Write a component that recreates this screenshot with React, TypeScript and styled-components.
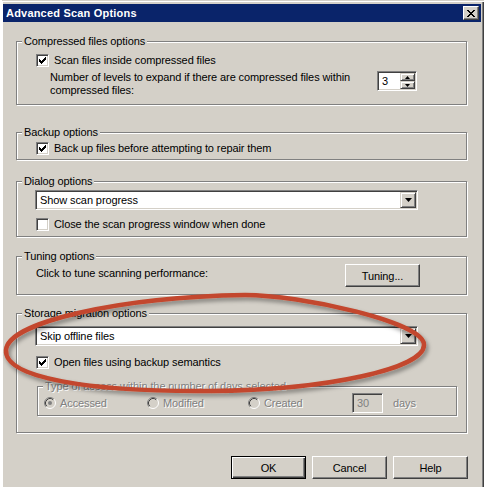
import React from "react";
import styled, { createGlobalStyle } from "styled-components";

const GlobalStyle = createGlobalStyle`
  html, body {
    margin: 0;
    padding: 0;
    background: #fff;
    overflow: hidden;
  }
  body {
    font-family: "Liberation Sans", Arial, sans-serif;
    font-size: 11px;
    color: #000;
  }
`;

const Page = styled.div`
  position: relative;
  width: 484px;
  height: 487px;
  overflow: hidden;
  background: #fff;
`;

const Window = styled.div`
  margin-left: 2px;
  width: 482px;
  height: 500px;
  box-sizing: border-box;
  padding: 4px 3px 0 1px;
  background: #d4d0c8;
  box-shadow: inset 0 1px #d4d0c8, inset 0 2px #fff, inset -1px 0 #404040,
    inset -2px 0 #808080, inset 1px 0 #fff;
`;

const TitleBar = styled.div`
  height: 18px;
  display: flex;
  align-items: center;
  padding-left: 3px;
  background: #0a246a;
  color: #fff;
  font-weight: bold;
  font-size: 11px;
  letter-spacing: 0.2px;
`;

const CloseButton = styled.div`
  margin-left: auto;
  margin-right: 2px;
  width: 16px;
  height: 14px;
  box-sizing: border-box;
  display: flex;
  align-items: center;
  justify-content: center;
  background: #d4d0c8;
  border: 1px solid;
  border-color: #fff #404040 #404040 #fff;
  box-shadow: inset -1px -1px #808080;
`;

const Content = styled.div`
  padding: 0 14px 0 13px;
  letter-spacing: -0.1px;
`;

const Group = styled.div<{ $top: number; $pb: number; $ml?: number; $mr?: number }>`
  margin: ${(p) => p.$top}px ${(p) => p.$mr ?? 0}px 0 ${(p) => p.$ml ?? 0}px;
  padding-bottom: ${(p) => p.$pb}px;
  border: 1px solid #808080;
  box-shadow: inset 1px 1px #fff, 1px 1px #fff;
`;

const Caption = styled.div<{ $disabled?: boolean }>`
  display: table;
  margin: -7px 0 0 5px;
  padding: 0 2px;
  line-height: 13px;
  background: #d4d0c8;
  color: ${(p) => (p.$disabled ? "#808080" : "#000")};
  text-shadow: ${(p) => (p.$disabled ? "1px 1px 0 #fff" : "none")};
`;

const CheckRow = styled.div<{ $top: number }>`
  display: flex;
  align-items: center;
  gap: 5px;
  margin-top: ${(p) => p.$top}px;
  padding-left: 19px;
  height: 13px;
  line-height: 13px;
`;

const Box = styled.div`
  width: 13px;
  height: 13px;
  box-sizing: border-box;
  display: flex;
  align-items: center;
  justify-content: center;
  background: #fff;
  border: 1px solid;
  border-color: #808080 #fff #fff #808080;
  box-shadow: inset 1px 1px #404040, inset -1px -1px #d4d0c8;
`;

const LevelsRow = styled.div`
  display: flex;
  align-items: flex-start;
  gap: 6px;
  margin-top: 4px;
  padding-left: 33px;
`;

const LevelsText = styled.div`
  width: 321px;
  line-height: 13px;
`;

const Sunken = styled.div<{ $w: number; $bg?: string }>`
  width: ${(p) => p.$w}px;
  height: 20px;
  box-sizing: border-box;
  display: flex;
  align-items: center;
  background: ${(p) => p.$bg ?? "#fff"};
  border: 1px solid;
  border-color: #808080 #fff #fff #808080;
  box-shadow: inset 1px 1px #404040, inset -1px -1px #d4d0c8;
`;

const Combo = styled(Sunken)<{ $top: number }>`
  margin: ${(p) => p.$top}px 0 0 18px;
`;

const FieldText = styled.span<{ $grey?: boolean }>`
  padding-left: 4px;
  color: ${(p) => (p.$grey ? "#808080" : "#000")};
`;

const SpinButtons = styled.div`
  margin-left: auto;
  margin-right: 1px;
  display: flex;
  flex-direction: column;
`;

const Raised = styled.div<{ $w: number; $h: number }>`
  width: ${(p) => p.$w}px;
  height: ${(p) => p.$h}px;
  box-sizing: border-box;
  display: flex;
  align-items: center;
  justify-content: center;
  background: #d4d0c8;
  border: 1px solid;
  border-color: #d4d0c8 #404040 #404040 #d4d0c8;
  box-shadow: inset 1px 1px #fff, inset -1px -1px #808080;
`;

const DropSlot = styled.div`
  margin-left: auto;
  margin-right: 1px;
`;

const TuneRow = styled.div`
  display: flex;
  margin-top: 1px;
  padding-left: 19px;
  padding-right: 46px;
`;

const TuneText = styled.div`
  padding-top: 3px;
  line-height: 13px;
`;

const PushButton = styled.div<{ $default?: boolean }>`
  width: 75px;
  height: 23px;
  box-sizing: border-box;
  display: flex;
  align-items: center;
  justify-content: center;
  background: #d4d0c8;
  border: 1px solid;
  border-color: ${(p) => (p.$default ? "#000" : "#fff #404040 #404040 #fff")};
  box-shadow: ${(p) =>
    p.$default
      ? "inset 1px 1px #fff, inset -1px -1px #404040, inset -2px -2px #808080"
      : "inset -1px -1px #808080"};
`;

const TuneButton = styled(PushButton)`
  margin-left: auto;
`;

const RadioRow = styled.div`
  display: flex;
  align-items: center;
  height: 20px;
  padding-left: 6px;
`;

const RadioItem = styled.div<{ $w: number }>`
  width: ${(p) => p.$w}px;
  display: flex;
  align-items: center;
  gap: 4px;
`;

const Muted = styled.span`
  color: #808080;
  text-shadow: 1px 1px 0 #fff;
`;

const DaysLabel = styled(Muted)`
  margin-left: 10px;
`;

const ButtonRow = styled.div`
  display: flex;
  justify-content: flex-end;
  gap: 6px;
  margin: 23px -1px 0 0;
`;

const Annotation = styled.svg`
  position: absolute;
  left: 0;
  top: 0;
  pointer-events: none;
`;

const CheckMark = () => (
  <svg width="7" height="7" viewBox="0 0 7 7" shapeRendering="crispEdges">
    <path
      d="M0 2h1v3H0z M1 3h1v3H1z M2 4h1v3H2z M3 3h1v3H3z M4 2h1v3H4z M5 1h1v3H5z M6 0h1v3H6z"
      fill="#000"
    />
  </svg>
);

const Checkbox = ({ checked }: { checked?: boolean }) => (
  <Box>{checked && <CheckMark />}</Box>
);

const Arrow = ({ up, w, h }: { up?: boolean; w: number; h: number }) => (
  <svg width={w} height={h} viewBox={`0 0 ${w} ${h}`}>
    <polygon
      points={up ? `0,${h} ${w},${h} ${w / 2},0` : `0,0 ${w},0 ${w / 2},${h}`}
      fill="#000"
    />
  </svg>
);

const Radio = ({ checked }: { checked?: boolean }) => (
  <svg width="12" height="12" viewBox="0 0 12 12">
    <circle cx="6" cy="6" r="5.5" fill="#d4d0c8" />
    <path d="M2.11 9.89 A5.5 5.5 0 0 1 9.89 2.11" stroke="#808080" fill="none" />
    <path d="M2.82 9.18 A4.5 4.5 0 0 1 9.18 2.82" stroke="#404040" fill="none" />
    <path d="M9.89 2.11 A5.5 5.5 0 0 1 2.11 9.89" stroke="#fff" fill="none" />
    {checked && <circle cx="6" cy="6" r="2" fill="#808080" />}
  </svg>
);

const ComboBox = ({ text, top }: { text: string; top: number }) => (
  <Combo $w={383} $top={top}>
    <FieldText>{text}</FieldText>
    <DropSlot>
      <Raised $w={16} $h={16}>
        <Arrow w={7} h={4} />
      </Raised>
    </DropSlot>
  </Combo>
);

export default function App() {
  return (
    <Page>
      <GlobalStyle />
      <Window>
        <TitleBar>
          Advanced Scan Options
          <CloseButton>
            <svg width="8" height="7" viewBox="0 0 8 7" shapeRendering="crispEdges">
              <path
                d="M0 0h2v1H0z M6 0h2v1H6z M1 1h2v1H1z M5 1h2v1H5z M2 2h4v1H2z M3 3h2v1H3z M2 4h4v1H2z M1 5h2v1H1z M5 5h2v1H5z M0 6h2v1H0z M6 6h2v1H6z"
                fill="#000"
              />
            </svg>
          </CloseButton>
        </TitleBar>

        <Content>
          {/* compressed files */}
          <Group $top={19} $pb={7}>
            <Caption>Compressed files options</Caption>
            <CheckRow $top={6}>
              <Checkbox checked />
              Scan files inside compressed files
            </CheckRow>
            <LevelsRow>
              <LevelsText>
                Number of levels to expand if there are compressed files within compressed files:
              </LevelsText>
              <Sunken $w={40}>
                <FieldText>3</FieldText>
                <SpinButtons>
                  <Raised $w={15} $h={8}>
                    <Arrow up w={5} h={3} />
                  </Raised>
                  <Raised $w={15} $h={8}>
                    <Arrow w={5} h={3} />
                  </Raised>
                </SpinButtons>
              </Sunken>
            </LevelsRow>
          </Group>

          {/* backup */}
          <Group $top={27} $pb={4}>
            <Caption>Backup options</Caption>
            <CheckRow $top={3}>
              <Checkbox checked />
              Back up files before attempting to repair them
            </CheckRow>
          </Group>

          {/* dialog */}
          <Group $top={21} $pb={5}>
            <Caption>Dialog options</Caption>
            <ComboBox text="Show scan progress" top={2} />
            <CheckRow $top={8}>
              <Checkbox />
              Close the scan progress window when done
            </CheckRow>
          </Group>

          {/* tuning */}
          <Group $top={19} $pb={7}>
            <Caption>Tuning options</Caption>
            <TuneRow>
              <TuneText>Click to tune scanning performance:</TuneText>
              <TuneButton>Tuning...</TuneButton>
            </TuneRow>
          </Group>

          {/* storage migration */}
          <Group $top={18} $pb={16}>
            <Caption>Storage migration options</Caption>
            <ComboBox text="Skip offline files" top={6} />
            <CheckRow $top={10}>
              <Checkbox checked />
              Open files using backup semantics
            </CheckRow>
            <Group $top={17} $pb={2} $ml={20} $mr={9}>
              <Caption $disabled>Type of access within the number of days selected</Caption>
              <RadioRow>
                <RadioItem $w={103}>
                  <Radio checked />
                  <Muted>Accessed</Muted>
                </RadioItem>
                <RadioItem $w={101}>
                  <Radio />
                  <Muted>Modified</Muted>
                </RadioItem>
                <RadioItem $w={104}>
                  <Radio />
                  <Muted>Created</Muted>
                </RadioItem>
                <Sunken $w={31} $bg="#d4d0c8">
                  <FieldText $grey>30</FieldText>
                </Sunken>
                <DaysLabel>days</DaysLabel>
              </RadioRow>
            </Group>
          </Group>

          <ButtonRow>
            <PushButton $default>OK</PushButton>
            <PushButton>Cancel</PushButton>
            <PushButton>Help</PushButton>
          </ButtonRow>
        </Content>
      </Window>

      {/* red hand-drawn highlight */}
      <Annotation width="484" height="487" viewBox="0 0 484 487">
        <defs>
          <filter id="shadow" x="-10%" y="-30%" width="120%" height="160%">
            <feDropShadow dx="2" dy="3" stdDeviation="2" floodColor="#000" floodOpacity="0.4" />
          </filter>
        </defs>
        <path
          d="M6 350 C8 322 120 297 245 295 C300 295 425 322 424 345 C424 368 330 390 210 391 C90 392 4 378 6 350 Z"
          fill="none"
          stroke="#c3472d"
          strokeWidth="4.5"
          filter="url(#shadow)"
        />
      </Annotation>
    </Page>
  );
}
